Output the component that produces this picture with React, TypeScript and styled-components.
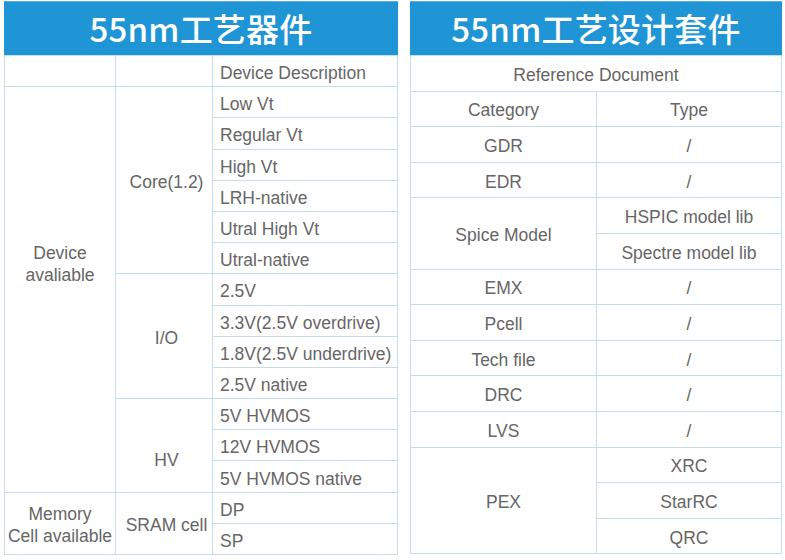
import React from "react";
import styled, { createGlobalStyle } from "styled-components";

const Global = createGlobalStyle`
  html, body { margin: 0; padding: 0; background: #fff; }
  body { font-family: "Liberation Sans", Arial, sans-serif; }
`;

const Page = styled.div`
  display: flex;
  gap: 12px;
  padding: 1px 3px 0 4px;
  width: 785px;
  box-sizing: border-box;
`;

const Panel = styled.section<{ $w: number }>`
  width: ${(p) => p.$w}px;
  display: flex;
  flex-direction: column;
`;

const Title = styled.h2`
  margin: 0;
  height: 54px;
  background: #2095d5;
  border-top: 1px solid #5fa9dc;
  box-sizing: border-box;
  color: #fff;
  font-family: "Noto Sans CJK SC", "Noto Sans", sans-serif;
  font-weight: 500;
  font-size: 33px;
  line-height: 52px;
  text-align: center;
  letter-spacing: 0.2px;
`;

const Table = styled.table`
  width: 100%;
  border-collapse: collapse;
  table-layout: fixed;
  color: #666;
  font-family: "Liberation Sans", Arial, sans-serif;
  font-size: 17.5px;
`;

const Cell = styled.td<{ $left?: boolean; $h: number; $shift?: number; $nudge?: number; $top?: number }>`
  border: 1px solid #c6dcf2;
  height: ${(p) => p.$h}px;
  padding-top: ${(p) => (p.$top ?? 3) + Math.max(0, p.$shift ?? 0)}px;
  padding-bottom: ${(p) => Math.max(0, -(p.$shift ?? 0))}px;
  padding-left: ${(p) => (p.$left ? 7 : 2 + (p.$nudge ?? 0))}px;
  padding-right: ${(p) => (p.$left ? 7 : 2)}px;
  text-align: ${(p) => (p.$left ? "left" : "center")};
  vertical-align: middle;
  white-space: nowrap;
  line-height: 22px;
  box-sizing: border-box;
`;

const LH = 31.2;
const RH = 35.6;

type Group = {
  label: React.ReactNode;
  shift: number;
  subs: { label: string; shift: number; items: string[] }[];
};

const leftGroups: Group[] = [
  {
    label: (
      <>
        Device
        <br />
        avaliable
      </>
    ),
    shift: -54,
    subs: [
      {
        label: "Core(1.2)",
        shift: 0,
        items: ["Low Vt", "Regular Vt", "High Vt", "LRH-native", "Utral High Vt", "Utral-native"],
      },
      {
        label: "I/O",
        shift: 0,
        items: ["2.5V", "3.3V(2.5V overdrive)", "1.8V(2.5V underdrive)", "2.5V native"],
      },
      { label: "HV", shift: 26, items: ["5V HVMOS", "12V HVMOS", "5V HVMOS native"] },
    ],
  },
  {
    label: (
      <>
        Memory
        <br />
        Cell available
      </>
    ),
    shift: 0,
    subs: [{ label: "SRAM cell", shift: 0, items: ["DP", "SP"] }],
  },
];

const rightRows: { cat: string; types: string[] }[] = [
  { cat: "GDR", types: ["/"] },
  { cat: "EDR", types: ["/"] },
  { cat: "Spice Model", types: ["HSPIC model lib", "Spectre model lib"] },
  { cat: "EMX", types: ["/"] },
  { cat: "Pcell", types: ["/"] },
  { cat: "Tech file", types: ["/"] },
  { cat: "DRC", types: ["/"] },
  { cat: "LVS", types: ["/"] },
  { cat: "PEX", types: ["XRC", "StarRC", "QRC"] },
];

function LeftTable() {
  const rows: React.ReactNode[] = [];
  leftGroups.forEach((g, gi) => {
    const total = g.subs.reduce((n, s) => n + s.items.length, 0);
    g.subs.forEach((s, si) => {
      s.items.forEach((it, ii) => {
        rows.push(
          <tr key={`${gi}-${si}-${ii}`}>
            {si === 0 && ii === 0 && (
              <Cell $h={LH} $shift={g.shift} $top={4} rowSpan={total}>
                {g.label}
              </Cell>
            )}
            {ii === 0 && (
              <Cell $h={LH} $shift={s.shift} $nudge={5} $top={4} rowSpan={s.items.length}>
                {s.label}
              </Cell>
            )}
            <Cell $h={LH} $left $top={4}>
              {it}
            </Cell>
          </tr>
        );
      });
    });
  });
  return (
    <Table>
      <colgroup>
        <col style={{ width: 111 }} />
        <col style={{ width: 97 }} />
        <col />
      </colgroup>
      <tbody>
        <tr>
          <Cell $h={LH} />
          <Cell $h={LH} />
          <Cell $h={LH} $left $top={4}>
            Device Description
          </Cell>
        </tr>
        {rows}
      </tbody>
    </Table>
  );
}

function RightTable() {
  return (
    <Table>
      <colgroup>
        <col style={{ width: 186 }} />
        <col />
      </colgroup>
      <tbody>
        <tr>
          <Cell $h={RH} colSpan={2}>
            Reference Document
          </Cell>
        </tr>
        <tr>
          <Cell $h={RH}>Category</Cell>
          <Cell $h={RH}>Type</Cell>
        </tr>
        {rightRows.map((r) =>
          r.types.map((t, i) => (
            <tr key={r.cat + t}>
              {i === 0 && (
                <Cell $h={RH} rowSpan={r.types.length}>
                  {r.cat}
                </Cell>
              )}
              <Cell $h={RH}>{t}</Cell>
            </tr>
          ))
        )}
      </tbody>
    </Table>
  );
}

export default function App() {
  return (
    <>
      <Global />
      <Page>
        <Panel $w={394}>
          <Title>55nm工艺器件</Title>
          <LeftTable />
        </Panel>
        <Panel $w={372}>
          <Title>55nm工艺设计套件</Title>
          <RightTable />
        </Panel>
      </Page>
    </>
  );
}
